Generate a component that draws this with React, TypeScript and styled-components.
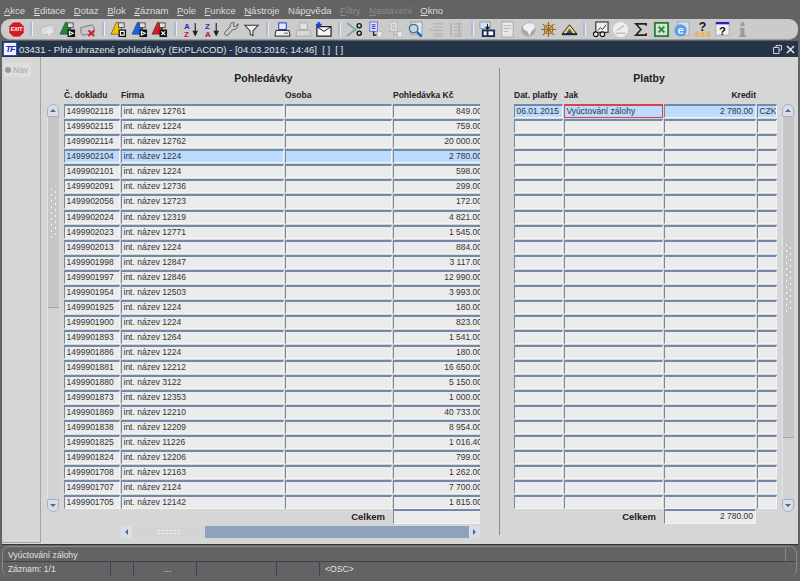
import React from 'react'
import styled, { createGlobalStyle } from 'styled-components'

const GlobalStyle = createGlobalStyle`
  html, body {
    margin: 0;
    padding: 0;
    background: #636363;
  }
  body {
    font-family: "Liberation Sans", Arial, sans-serif;
  }
`

const Page = styled.div`
  width: 800px;
  height: 581px;
  overflow: hidden;
  background: #636363;
  display: flex;
  flex-direction: column;
`

const MenuBar = styled.div`
  height: 19px;
  box-sizing: border-box;
  padding: 2px 0 0 4px;
  display: flex;
  align-items: center;
  gap: 8.5px;
  font-size: 9.5px;
  color: #dcdcdc;
`

const MenuItem = styled.span<{ $off?: boolean }>`
  color: ${(p) => (p.$off ? '#8c8c8c' : '#dcdcdc')};
  u {
    text-decoration-thickness: 1px;
  }
`

const Toolbar = styled.div`
  height: 21px;
  box-sizing: border-box;
  margin: 0 2px 0 1px;
  padding-left: 5px;
  display: flex;
  align-items: center;
  background: #cbcbcb;
  border-radius: 9px;
  border-bottom: 1px solid #9c9c9c;
`

const Tool = styled.div`
  width: 20.4px;
  height: 18px;
  flex: none;
  display: flex;
  align-items: center;
  justify-content: center;
  svg {
    width: 17px;
    height: 17px;
    display: block;
  }
`

const ToolSep = styled.div`
  width: 10.6px;
  flex: none;
  display: flex;
  justify-content: center;
  &::before {
    content: '';
    width: 2px;
    height: 14px;
    background: #a9bbd6;
    border-right: 1px solid #eee;
  }
`

const Window = styled.div`
  flex: 1;
  min-height: 0;
  margin: 1px 2px 0 2px;
  display: flex;
  flex-direction: column;
  background: #d6d6d6;
  border-bottom: 1px solid #2d3542;
`

const TitleBar = styled.div`
  height: 16px;
  flex: none;
  background: #26344a;
  display: flex;
  align-items: center;
  padding: 0 3px 0 1px;
  color: #e4e4e4;
  font-size: 9.5px;
`

const TitleLogo = styled.div`
  width: 14px;
  height: 14px;
  flex: none;
  margin-right: 2px;
  background: #f4f6ff;
  border: 1px solid #2a4cd0;
  box-sizing: border-box;
  color: #1c2fb8;
  font: italic bold 9px/12px "Liberation Sans", sans-serif;
  letter-spacing: -1px;
  text-align: center;
`

const TitleText = styled.span`
  flex: 1;
  white-space: nowrap;
`

const TitleControls = styled.div`
  display: flex;
  align-items: center;
  gap: 4px;
  svg {
    display: block;
  }
`

const Body = styled.div`
  flex: 1;
  min-height: 0;
  display: flex;
`

const Sidebar = styled.div`
  width: 39px;
  flex: none;
  box-sizing: border-box;
  margin-bottom: 1px;
  border-right: 1px solid #a4a4a4;
  border-bottom: 1px solid #a4a4a4;
  padding: 6px 0 0 2px;
`

const NavChip = styled.div`
  width: 27px;
  height: 14px;
  background: #dedede;
  color: #a8a8a8;
  font-size: 8.5px;
  display: flex;
  align-items: center;
  gap: 2px;
  padding-left: 1px;
  box-sizing: border-box;
`

const NavDot = styled.span`
  width: 6px;
  height: 6px;
  border-radius: 50%;
  background: #9a9a9a;
`

const LeftPanel = styled.section`
  width: 458px;
  flex: none;
  box-sizing: border-box;
  padding: 14px 19px 0 6px;
`

const RightPanel = styled.section`
  flex: 1;
  margin: 11px 0 9px;
  border-left: 1px solid #8d8d8d;
  padding: 3px 0 0 14px;
`

const PanelTitle = styled.h2<{ $shift?: number }>`
  margin: 0;
  height: 14px;
  padding-right: ${(p) => p.$shift ?? 0}px;
  font-size: 10.5px;
  line-height: 14px;
  font-weight: bold;
  color: #222;
  text-align: center;
`

const TableArea = styled.div`
  display: flex;
  gap: 5px;
`

const TableWrap = styled.div<{ $width: number }>`
  width: ${(p) => p.$width}px;
  flex: none;
  overflow: hidden;
`

const Row = styled.div<{ $cols: string }>`
  display: grid;
  grid-template-columns: ${(p) => p.$cols};
  column-gap: 1px;
`

const HeaderRow = styled(Row)`
  height: 14px;
  margin-top: 3px;
  margin-bottom: 2.2px;
`

const HeadCell = styled.div<{ $right?: boolean }>`
  font-size: 8.5px;
  line-height: 14px;
  font-weight: bold;
  color: #222;
  white-space: nowrap;
  text-align: ${(p) => (p.$right ? 'right' : 'left')};
`

const Rows = styled.div`
  display: flex;
  flex-direction: column;
  gap: 1px;
`

const Cell = styled.div<{ $active?: boolean; $focus?: boolean; $right?: boolean }>`
  height: 14.05px;
  box-sizing: border-box;
  border-top: 2px solid ${(p) => (p.$focus ? '#d8444a' : '#7488a8')};
  border-left: 1px solid ${(p) => (p.$focus ? '#d8444a' : '#7488a8')};
  border-right: 1px solid ${(p) => (p.$focus ? '#d8444a' : '#f4f4f4')};
  border-bottom: 1px solid ${(p) => (p.$focus ? '#d8444a' : '#f4f4f4')};
  background: ${(p) => (p.$active ? '#bbdcff' : '#ebebeb')};
  color: #333;
  font-size: 8.5px;
  line-height: 10.5px;
  padding: 0 2px 0 1.5px;
  white-space: nowrap;
  overflow: hidden;
  text-align: ${(p) => (p.$right ? 'right' : 'left')};
`

const TotalRow = styled(Row)`
  align-items: center;
`

const TotalLabel = styled.div<{ $span: number }>`
  grid-column: span ${(p) => p.$span};
  font-size: 9.5px;
  font-weight: bold;
  color: #222;
  text-align: right;
  padding-right: 7px;
`

const VScroll = styled.div`
  width: 12px;
  flex: none;
  margin-top: 19px;
  display: flex;
  flex-direction: column;
  height: 408px;
`

const ScrollButton = styled.div<{ $down?: boolean }>`
  height: 13px;
  flex: none;
  box-sizing: border-box;
  background: #d9dfe8;
  border: 1px solid #a7b2c4;
  border-radius: ${(p) => (p.$down ? '0 0 6px 6px' : '6px 6px 0 0')};
  display: flex;
  align-items: center;
  justify-content: center;
  &::before {
    content: '';
    border-left: 3px solid transparent;
    border-right: 3px solid transparent;
    ${(p) => (p.$down ? 'border-top: 3px solid #56688a;' : 'border-bottom: 3px solid #56688a;')}
  }
`

const ScrollTrack = styled.div`
  flex: 1;
  background: #d2d2d2;
  border-left: 1px solid #e4e4e4;
  display: flex;
  flex-direction: column;
`

const ScrollThumb = styled.div<{ $size: number }>`
  flex: 0 0 ${(p) => p.$size}%;
  box-sizing: border-box;
  background: #c6c6c6;
  border-bottom: 1px solid #a0a8b4;
  display: flex;
  align-items: center;
  justify-content: center;
`

const Grip = styled.div<{ $length: number }>`
  width: 7px;
  height: ${(p) => p.$length}px;
  background-image:
    radial-gradient(circle, #f4f4f4 0.8px, transparent 1px),
    radial-gradient(circle, #f4f4f4 0.8px, transparent 1px);
  background-size: 7px 6px;
  background-position: -2px 0, 2px 3px;
`

const HScroll = styled.div`
  height: 12px;
  margin: 2px 0 0 57px;
  display: flex;
  background: #8fa2bc;
`

const HScrollEnd = styled.div<{ $right?: boolean }>`
  width: 11px;
  flex: none;
  background: #d9dfe8;
  display: flex;
  align-items: center;
  justify-content: center;
  &::before {
    content: '';
    border-top: 3px solid transparent;
    border-bottom: 3px solid transparent;
    ${(p) => (p.$right ? 'border-left: 3px solid #56688a;' : 'border-right: 3px solid #56688a;')}
  }
`

const HScrollThumb = styled.div`
  width: 73px;
  flex: none;
  background: #d4d4d4;
  display: flex;
  align-items: center;
  justify-content: center;
  margin-right: auto;
`

const HGrip = styled.div`
  width: 24px;
  height: 6px;
  background-image: radial-gradient(circle, #f4f4f4 0.8px, transparent 1px);
  background-size: 4px 3px;
`

const StatusFrame = styled.div`
  flex: none;
  height: 30px;
  margin: 1px 3px 5px 2px;
  box-sizing: border-box;
  border: 1px solid #8b8b8b;
  border-bottom: 0;
  border-radius: 7px;
  color: #e2e2e2;
  font-size: 8.6px;
`

const HintRow = styled.div`
  height: 14px;
  padding-left: 5px;
  line-height: 16px;
  border-bottom: 1px solid #3c4658;
  position: relative;
  &::after {
    content: '';
    position: absolute;
    right: 10px;
    top: 1px;
    bottom: 0;
    width: 1px;
    background: #8b8b8b;
  }
`

const StatusRow = styled.div`
  height: 14px;
  display: flex;
  line-height: 14px;
`

const StatusCell = styled.div<{ $width: number; $center?: boolean }>`
  width: ${(p) => p.$width}px;
  flex: none;
  box-sizing: border-box;
  border-right: 1px solid #3c4658;
  padding-left: 5px;
  text-align: ${(p) => (p.$center ? 'center' : 'left')};
  &:last-child {
    border-right: 0;
  }
`

const ExitIcon = () => (
  <svg viewBox="0 0 18 18">
    <polygon points="5.5,1 12.5,1 17,5.5 17,12.5 12.5,17 5.500,17 1,12.5 1,5.500" fill="#d41a26" stroke="#eee" strokeWidth="0.6" />
    <text x="9" y="11" fontSize="5.600" fontWeight="bold" textAnchor="middle" fill="#fff" fontFamily="Liberation Sans">EXIT</text>
  </svg>
)

const CardIcon = ({ off, color }: { off?: boolean; color?: string }) => (
  <svg viewBox="0 0 18 18">
    <path d="M2 7l12-3 2 3v6l-12 2-2-3z" fill={off ? '#dcdcdc' : '#c8c8c8'} stroke={off ? '#bdbdbd' : '#777'} />
    {off && <path d="M11 8v7M8 11.500h7" stroke="#e8e8e8" strokeWidth="2.400" />}
    {color && <path d="M10 10l6 6M16 10l-6 6" stroke={color} strokeWidth="2" />}
  </svg>
)

const BellIcon = ({ color, mark }: { color: string; mark: string }) => (
  <svg viewBox="0 0 18 18">
    <path d="M7 1l-6 13h10l2-9z" fill={color} stroke="#333" strokeWidth="0.6" />
    <rect x="9" y="2" width="6" height="5" fill="#ddd" stroke="#333" strokeWidth="0.8" />
    <rect x="9" y="9" width="8" height="8" fill="#111" />
    <path d={mark} stroke="#fff" strokeWidth="1.200" fill="none" />
  </svg>
)

const SortIcon = ({ first, second }: { first: string; second: string }) => (
  <svg viewBox="0 0 18 18">
    <path d="M14 2v12M12 11l2 4 2-4z" stroke="#222" strokeWidth="1.200" fill="#222" />
    <text x="2" y="8" fontSize="8.500" fontWeight="bold" fill="#1c2fb8" fontFamily="Liberation Sans">{first}</text>
    <text x="2" y="16.500" fontSize="8.500" fontWeight="bold" fill="#b01a24" fontFamily="Liberation Sans">{second}</text>
  </svg>
)

const WrenchIcon = () => (
  <svg viewBox="0 0 18 18">
    <path d="M16 3l-3 3-2-1 1-3c-3-1-5 1-4.500 4L2 12c-1 2 1 4 3 3l5.500-6c3 .5 5-1 5.500-6z" fill="none" stroke="#555" strokeWidth="1" />
  </svg>
)

const FunnelIcon = () => (
  <svg viewBox="0 0 18 18">
    <path d="M2 4.500h14L10.500 10.500v5l-3-1.500v-3.500z" fill="#efefef" stroke="#333" strokeWidth="1.100" />
  </svg>
)

const PrinterIcon = ({ off }: { off?: boolean }) => (
  <svg viewBox="0 0 18 18">
    <rect x="5" y="2" width="8" height="7" fill={off ? '#e2e2e2' : '#dfe8ff'} stroke={off ? '#aaa' : '#1c2fb8'} />
    <path d="M2 10h14l1 6H1z" fill={off ? '#d8d8d8' : '#eee'} stroke={off ? '#aaa' : '#222'} />
    {!off && <path d="M11 13h1.500M13 13h1.500" stroke="#2a9a3a" strokeWidth="1.500" />}
  </svg>
)

const MailIcon = () => (
  <svg viewBox="0 0 18 18">
    <rect x="2" y="6" width="15" height="10" fill="#f4f4f4" stroke="#111" strokeWidth="1.200" />
    <path d="M2 6l7.500 5L17 6" fill="none" stroke="#111" />
    <path d="M4 1v6M1 4h6" stroke="#0b3df0" strokeWidth="2.200" />
  </svg>
)

const ScissorsIcon = () => (
  <svg viewBox="0 0 18 18">
    <path d="M1 2l10 8M1 16l10-8" stroke="#6fa5a0" strokeWidth="1.600" />
    <circle cx="14" cy="5" r="2.200" fill="none" stroke="#111" strokeWidth="1.400" />
    <circle cx="14" cy="13" r="2.200" fill="none" stroke="#111" strokeWidth="1.400" />
  </svg>
)

const CopyIcon = ({ off }: { off?: boolean }) => (
  <svg viewBox="0 0 18 18">
    <rect x="3" y="1" width="8" height="10" fill={off ? '#dedede' : '#e4e4ff'} stroke={off ? '#b5b5b5' : '#6a6ad0'} />
    <path d="M5 4h4M5 6h4M5 8h4" stroke={off ? '#b5b5b5' : '#1c2fb8'} />
    <path d="M7 11v4h3" fill="none" stroke={off ? '#b5b5b5' : '#111'} strokeWidth="1.300" />
    <rect x="11" y="11" width="5" height="6" fill="#e8e8e8" stroke="#bbb" />
  </svg>
)

const SearchIcon = () => (
  <svg viewBox="0 0 18 18">
    <rect x="4" y="1" width="12" height="13" fill="#e4e4e4" stroke="#999" />
    <circle cx="7" cy="8" r="4.500" fill="#bcd8ea" stroke="#46718e" strokeWidth="1.400" />
    <path d="M10.500 11.500l5 5" stroke="#1b5fc0" strokeWidth="2.400" />
  </svg>
)

const TreeIcon = ({ split }: { split?: boolean }) => (
  <svg viewBox="0 0 18 18">
    <path d="M6 3h9M6 6.500h9M6 10h9M6 13.500h9M6 16h9" stroke="#adadad" />
    {split ? <path d="M3 2v14M12 2v14" stroke="#adadad" strokeWidth="1.500" /> : <path d="M2 9h3" stroke="#adadad" strokeWidth="1.500" />}
  </svg>
)

const FormIcon = () => (
  <svg viewBox="0 0 18 18">
    <rect x="1" y="1" width="11" height="7" fill="#cfe3f7" stroke="#999" />
    <path d="M9 3v5M7 6l2 3 2-3" stroke="#111" fill="#111" />
    <rect x="3" y="9" width="14" height="8" fill="#1c2f5c" />
    <rect x="5" y="11" width="3" height="4" fill="#fff" />
    <rect x="10" y="11" width="5" height="4" fill="#fff" />
  </svg>
)

const SheetIcon = () => (
  <svg viewBox="0 0 18 18">
    <rect x="3" y="1" width="12" height="16" fill="#e8e8e8" stroke="#a8a8a8" />
    <path d="M5 5h8M5 8h8M5 11h5" stroke="#b8b8b8" />
  </svg>
)

const GlobeIcon = () => (
  <svg viewBox="0 0 18 18">
    <circle cx="9" cy="9" r="7.500" fill="#a8a8a8" />
    <path d="M3 5l5-3 6 1 2 4-4 4-2 5-2-5-4-2z" fill="#f0f0f0" />
  </svg>
)

const WheelIcon = () => (
  <svg viewBox="0 0 18 18">
    <path d="M3 3l12 12M15 3L3 15M9 1v16M1 9h16" stroke="#a06c10" strokeWidth="1.300" />
    <circle cx="9" cy="9" r="4.500" fill="none" stroke="#a06c10" strokeWidth="1.300" />
  </svg>
)

const PeakIcon = () => (
  <svg viewBox="0 0 18 18">
    <path d="M1 14L9 4l8 10z" fill="#f1d94e" stroke="#222" />
    <path d="M5 14l4-6 4 6z" fill="#1c4fd8" />
    <rect x="1" y="13" width="16" height="2" fill="#222" />
  </svg>
)

const ChartIcon = () => (
  <svg viewBox="0 0 18 18">
    <rect x="4" y="1" width="13" height="11" fill="#efefef" stroke="#333" strokeWidth="1.200" />
    <path d="M6 10l3-3 2 2 4-5" stroke="#333" fill="none" />
    <circle cx="4" cy="14" r="2.500" fill="#eee" stroke="#111" strokeWidth="1.200" />
    <circle cx="11" cy="14" r="2.500" fill="#eee" stroke="#111" strokeWidth="1.200" />
  </svg>
)

const DiscIcon = () => (
  <svg viewBox="0 0 18 18">
    <circle cx="9" cy="9" r="8" fill="#eee" />
    <path d="M4 13h10M5 10l8-5" stroke="#bdbdbd" strokeWidth="1.500" />
  </svg>
)

const SigmaIcon = () => (
  <svg viewBox="0 0 18 18">
    <path d="M15 5V3H4l5.500 6L4 15h11v-2" fill="none" stroke="#222" strokeWidth="1.700" />
  </svg>
)

const ExcelIcon = () => (
  <svg viewBox="0 0 18 18">
    <rect x="1" y="1" width="16" height="16" fill="#2e7d3e" />
    <rect x="3" y="3" width="12" height="12" fill="#cfe6cf" />
    <path d="M6 6l6 6M12 6l-6 6" stroke="#2e7d3e" strokeWidth="2" />
  </svg>
)

const BrowserIcon = () => (
  <svg viewBox="0 0 18 18">
    <rect x="5" y="1" width="12" height="14" fill="#d8e2ef" stroke="#9aa8bc" />
    <circle cx="8" cy="10" r="6.500" fill="#5a9fe6" />
    <text x="8" y="14" fontSize="12" fontWeight="bold" textAnchor="middle" fill="#eaf3ff" fontFamily="Liberation Sans">e</text>
  </svg>
)

const HelpPeopleIcon = () => (
  <svg viewBox="0 0 18 18">
    <rect x="1" y="11" width="4" height="6" fill="#e8b566" />
    <rect x="7" y="11" width="4" height="6" fill="#e8b566" />
    <rect x="13" y="11" width="4" height="6" fill="#e8b566" />
    <text x="9" y="11" fontSize="13" fontWeight="bold" textAnchor="middle" fill="#111" fontFamily="Liberation Sans">?</text>
  </svg>
)

const HelpBoxIcon = () => (
  <svg viewBox="0 0 18 18">
    <rect x="2" y="2" width="14" height="13" fill="#f2f2f2" stroke="#aaa" />
    <rect x="2" y="1" width="14" height="2.500" fill="#3a12c8" />
    <text x="9" y="15" fontSize="12" fontWeight="bold" textAnchor="middle" fill="#111" fontFamily="Liberation Sans">?</text>
  </svg>
)

const InfoIcon = () => (
  <svg viewBox="0 0 18 18">
    <circle cx="9" cy="3.500" r="2.200" fill="#9a9a9a" />
    <path d="M6 7.500h5V15h1.500v2h-7v-2H7V9.500H6z" fill="#9a9a9a" />
  </svg>
)

const SEP = 'sep'
const toolbarItems: (React.ReactNode | string)[] = [
  <ExitIcon />, SEP,
  <CardIcon off />, <BellIcon color="#1f8a2e" mark="M11 11l4 2-4 2z" />, <CardIcon color="#d41a26" />, SEP,
  <BellIcon color="#f2c400" mark="M11 11h4v4h-4z" />, <BellIcon color="#1466e0" mark="M11 11l4 2-4 2z" />, <BellIcon color="#d41a26" mark="M11 11l4 4M15 11l-4 4" />, SEP,
  <SortIcon first="A" second="Z" />, <SortIcon first="Z" second="A" />, <WrenchIcon />, <FunnelIcon />, SEP,
  <PrinterIcon />, <PrinterIcon off />, <MailIcon />, SEP,
  <ScissorsIcon />, <CopyIcon />, <CopyIcon off />, <SearchIcon />, <TreeIcon />, <TreeIcon split />, SEP,
  <FormIcon />, <SheetIcon />, <GlobeIcon />, <WheelIcon />, <PeakIcon />, SEP,
  <ChartIcon />, <DiscIcon />, <SigmaIcon />, <ExcelIcon />, <BrowserIcon />, <HelpPeopleIcon />, <HelpBoxIcon />, <InfoIcon />,
]

const menus = [
  ['A', 'kce'], ['E', 'ditace'], ['D', 'otaz'], ['B', 'lok'], ['Z', 'áznam'], ['P', 'ole'], ['F', 'unkce'], ['N', 'ástroje'],
]

const invoices: [string, string, string][] = [
  ['1499902118', 'int. název 12761', '849.00'],
  ['1499902115', 'int. název 1224', '759.00'],
  ['1499902114', 'int. název 12762', '20 000.00'],
  ['1499902104', 'int. název 1224', '2 780.00'],
  ['1499902101', 'int. název 1224', '598.00'],
  ['1499902091', 'int. název 12736', '299.00'],
  ['1499902056', 'int. název 12723', '172.00'],
  ['1499902024', 'int. název 12319', '4 821.00'],
  ['1499902023', 'int. název 12771', '1 545.00'],
  ['1499902013', 'int. název 1224', '884.00'],
  ['1499901998', 'int. název 12847', '3 117.00'],
  ['1499901997', 'int. název 12846', '12 990.00'],
  ['1499901954', 'int. název 12503', '3 993.00'],
  ['1499901925', 'int. název 1224', '180.00'],
  ['1499901900', 'int. název 1224', '823.00'],
  ['1499901893', 'int. název 1264', '1 541.00'],
  ['1499901886', 'int. název 1224', '180.00'],
  ['1499901881', 'int. název 12212', '16 650.00'],
  ['1499901880', 'int. název 3122', '5 150.00'],
  ['1499901873', 'int. název 12353', '1 000.00'],
  ['1499901869', 'int. název 12210', '40 733.00'],
  ['1499901838', 'int. název 12209', '8 954.00'],
  ['1499901825', 'int. název 11226', '1 016.40'],
  ['1499901824', 'int. název 12206', '799.00'],
  ['1499901708', 'int. název 12163', '1 262.00'],
  ['1499901707', 'int. název 2124', '7 700.00'],
  ['1499901705', 'int. název 12142', '1 815.00'],
]

const LEFT_COLS = '56px 163px 107px 92px'
const RIGHT_COLS = '49px 99px 92px 20px'
const ACTIVE_ROW = 3

const VerticalScrollbar = ({ thumb, grip }: { thumb: number; grip: number }) => (
  <VScroll>
    <ScrollButton />
    <ScrollTrack>
      <ScrollThumb $size={thumb}>
        <Grip $length={grip} />
      </ScrollThumb>
    </ScrollTrack>
    <ScrollButton $down />
  </VScroll>
)

export default function App() {
  return (
    <Page>
      <GlobalStyle />
      <MenuBar>
        {menus.map(([key, rest]) => (
          <MenuItem key={key}><u>{key}</u>{rest}</MenuItem>
        ))}
        <MenuItem>Náp<u>o</u>věda</MenuItem>
        <MenuItem $off><u>F</u>iltry</MenuItem>
        <MenuItem $off><u>N</u>astavení</MenuItem>
        <MenuItem><u>O</u>kno</MenuItem>
      </MenuBar>
      <Toolbar>
        {toolbarItems.map((item, i) =>
          item === SEP ? <ToolSep key={i} /> : <Tool key={i}>{item}</Tool>
        )}
      </Toolbar>
      <Window>
        <TitleBar>
          <TitleLogo>TF</TitleLogo>
          <TitleText>03431 - Plně uhrazené pohledávky (EKPLACOD) - [04.03.2016; 14:46]&nbsp; [ ]&nbsp; [ ]</TitleText>
          <TitleControls>
            <svg width="9" height="9" viewBox="0 0 9 9">
              <path d="M3 2.500V.5h5.500v4.500H6.500M.5 2.500H6v6H.5z" fill="none" stroke="#d0d0d0" />
            </svg>
            <svg width="9" height="9" viewBox="0 0 9 9">
              <path d="M1 1l7 7M8 1L1 8" stroke="#e8e8e8" strokeWidth="1.500" />
            </svg>
          </TitleControls>
        </TitleBar>
        <Body>
          <Sidebar>
            <NavChip><NavDot />Nav</NavChip>
          </Sidebar>
          <LeftPanel>
            <PanelTitle>Pohledávky</PanelTitle>
            <TableArea>
              <VerticalScrollbar thumb={50} grip={52} />
              <TableWrap $width={416}>
                <HeaderRow $cols={LEFT_COLS}>
                  <HeadCell>Č. dokladu</HeadCell>
                  <HeadCell>Firma</HeadCell>
                  <HeadCell>Osoba</HeadCell>
                  <HeadCell>Pohledávka Kč</HeadCell>
                </HeaderRow>
                <Rows>
                  {invoices.map(([doc, firm, amount], i) => (
                    <Row key={doc} $cols={LEFT_COLS}>
                      <Cell $active={i === ACTIVE_ROW}>{doc}</Cell>
                      <Cell $active={i === ACTIVE_ROW}>{firm}</Cell>
                      <Cell $active={i === ACTIVE_ROW} />
                      <Cell $active={i === ACTIVE_ROW} $right>{amount}</Cell>
                    </Row>
                  ))}
                </Rows>
                <TotalRow $cols={LEFT_COLS}>
                  <TotalLabel $span={3}>Celkem</TotalLabel>
                  <Cell />
                </TotalRow>
                <HScroll>
                  <HScrollEnd />
                  <HScrollThumb><HGrip /></HScrollThumb>
                  <HScrollEnd $right />
                </HScroll>
              </TableWrap>
            </TableArea>
          </LeftPanel>
          <RightPanel>
            <PanelTitle $shift={14}>Platby</PanelTitle>
            <TableArea>
              <TableWrap $width={263}>
                <HeaderRow $cols={RIGHT_COLS}>
                  <HeadCell>Dat. platby</HeadCell>
                  <HeadCell>Jak</HeadCell>
                  <HeadCell $right>Kredit</HeadCell>
                  <HeadCell />
                </HeaderRow>
                <Rows>
                  {invoices.map(([doc], i) => (
                    <Row key={doc} $cols={RIGHT_COLS}>
                      <Cell $active={i === 0}>{i === 0 && '06.01.2015'}</Cell>
                      <Cell $active={i === 0} $focus={i === 0}>{i === 0 && 'Vyúctování zálohy'}</Cell>
                      <Cell $active={i === 0} $right>{i === 0 && '2 780.00'}</Cell>
                      <Cell $active={i === 0}>{i === 0 && 'CZK'}</Cell>
                    </Row>
                  ))}
                </Rows>
                <TotalRow $cols={RIGHT_COLS}>
                  <TotalLabel $span={2}>Celkem</TotalLabel>
                  <Cell $right>2 780.00</Cell>
                </TotalRow>
              </TableWrap>
              <VerticalScrollbar thumb={84} grip={70} />
            </TableArea>
          </RightPanel>
        </Body>
      </Window>
      <StatusFrame>
        <HintRow>Vyúctování zálohy</HintRow>
        <StatusRow>
          <StatusCell $width={108}>Záznam: 1/1</StatusCell>
          <StatusCell $width={23} />
          <StatusCell $width={63} $center>...</StatusCell>
          <StatusCell $width={80} />
          <StatusCell $width={43} />
          <StatusCell $width={200}>&lt;OSC&gt;</StatusCell>
        </StatusRow>
      </StatusFrame>
    </Page>
  )
}
